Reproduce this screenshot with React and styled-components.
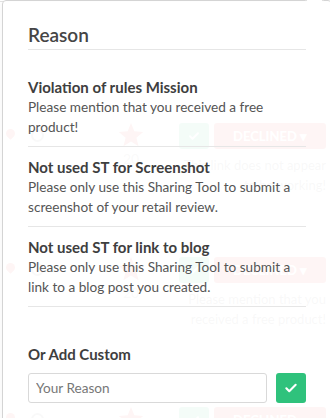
import React from "react";
import styled, { createGlobalStyle } from "styled-components";

const GlobalStyle = createGlobalStyle`
  html, body {
    margin: 0;
    padding: 0;
    overflow: hidden;
    background: #fff;
  }
  body {
    font-family: Lato, "Open Sans", sans-serif;
    color: #444;
  }
`;

const reasons = [
  {
    title: "Violation of rules Mission",
    text: "Please mention that you received a free product!",
  },
  {
    title: "Not used ST for Screenshot",
    text: "Please only use this Sharing Tool to submit a screenshot of your retail review.",
  },
  {
    title: "Not used ST for link to blog",
    text: "Please only use this Sharing Tool to submit a link to a blog post you created.",
  },
];

const rows = [
  { top: 121, note: "This link does not appear to be working!" },
  { top: 110, note: "Please mention that you received a free product!" },
  { top: 126, note: "" },
];

function Check({ size = 14 }) {
  return (
    <svg width={size} height={size} viewBox="0 0 24 24" fill="none">
      <path d="M4 12.5l5 5L20 6.5" stroke="#fff" strokeWidth="3.6" strokeLinecap="round" strokeLinejoin="round" />
    </svg>
  );
}

function Star() {
  return (
    <svg width="26" height="25" viewBox="0 0 24 23">
      <path d="M12 0l3.1 7.6 8.2.6-6.3 5.3 2 8-7-4.4-7 4.4 2-8L.7 8.2l8.2-.6z" fill="#e0413c" />
    </svg>
  );
}

export default function App() {
  return (
    <Page>
      <GlobalStyle />
      <Backdrop aria-hidden="true">
        {rows.map((row, i) => (
          <Row key={i} $top={row.top}>
            <Icons>
              <Pin />
              <Dot />
            </Icons>
            <Rating>
              <Star />
              <Count>20</Count>
            </Rating>
            <Actions>
              <Buttons>
                <OkButton><Check size={12} /></OkButton>
                <Declined>DECLINED ▾</Declined>
              </Buttons>
              <Note>{row.note}</Note>
            </Actions>
          </Row>
        ))}
      </Backdrop>

      <Popover>
        <Arrow />
        <Title>Reason</Title>
        <List>
          {reasons.map((r) => (
            <Item key={r.title}>
              <ItemTitle>{r.title}</ItemTitle>
              <ItemText>{r.text}</ItemText>
            </Item>
          ))}
        </List>
        <Custom>
          <ItemTitle>Or Add Custom</ItemTitle>
          <CustomRow>
            <Input placeholder="Your Reason" />
            <SubmitButton><Check /></SubmitButton>
          </CustomRow>
        </Custom>
      </Popover>
    </Page>
  );
}

const Page = styled.div`
  position: relative;
  width: 330px;
  height: 418px;
  overflow: hidden;
`;

const Backdrop = styled.div`
  display: flex;
  flex-direction: column;
  border-top: 1px solid #e3e3e3;
  margin-top: 1px;
`;

const Row = styled.div`
  display: flex;
  align-items: flex-start;
  padding-top: ${(p) => p.$top}px;
  height: 24px;
`;

const Icons = styled.div`
  display: flex;
  gap: 16px;
  padding: 6px 0 0 6px;
  width: 92px;
`;

const Pin = styled.span`
  width: 9px;
  height: 9px;
  background: #e0413c;
  border-radius: 50% 50% 50% 0;
  transform: rotate(-45deg);
`;

const Dot = styled.span`
  width: 9px;
  height: 9px;
  border: 2px solid #888;
  border-radius: 50%;
`;

const Rating = styled.div`
  display: flex;
  flex-direction: column;
  align-items: center;
  width: 44px;
  margin-left: 11px;
`;

const Count = styled.span`
  font-size: 14px;
  color: #999;
  margin-top: 2px;
`;

const Actions = styled.div`
  display: flex;
  flex-direction: column;
  align-items: flex-end;
  margin-left: 23px;
`;

const Buttons = styled.div`
  display: flex;
  gap: 5px;
`;

const OkButton = styled.div`
  width: 30px;
  height: 26px;
  border-radius: 3px;
  background: #2fc27c;
  display: flex;
  align-items: center;
  justify-content: center;
`;

const Declined = styled.div`
  width: 112px;
  height: 26px;
  border-radius: 3px;
  background: #e0413c;
  color: #fff;
  font-size: 13px;
  font-weight: 700;
  display: flex;
  align-items: center;
  justify-content: center;
`;

const Note = styled.div`
  width: 150px;
  text-align: right;
  font-size: 13px;
  line-height: 20px;
  color: #777;
  margin-top: 6px;
`;

const Popover = styled.div`
  position: absolute;
  left: 2px;
  top: 0;
  width: 278px;
  height: 440px;
  padding: 21px 25px 0 25px;
  display: flex;
  flex-direction: column;
  border: 1px solid #d4d4d4;
  border-radius: 4px;
  background: rgba(255, 255, 255, 0.95);
  box-shadow: 0 2px 8px rgba(0, 0, 0, 0.05);
`;

const Arrow = styled.span`
  position: absolute;
  top: -7px;
  left: 305px;
  width: 12px;
  height: 12px;
  background: #fff;
  border-left: 1px solid #d4d4d4;
  border-top: 1px solid #d4d4d4;
  transform: rotate(45deg);
`;

const Title = styled.h3`
  flex: none;
  margin: 0;
  font-size: 19px;
  font-weight: 600;
  color: #454545;
  line-height: 26px;
  padding-bottom: 1px;
  border-bottom: 1px solid #e6e6e6;
`;

const List = styled.div`
  flex: none;
  display: flex;
  flex-direction: column;
  gap: 10px;
  margin-top: 27px;
`;

const Item = styled.div`
  flex: none;
  height: 60px;
  padding-bottom: 9px;
  border-bottom: 1px solid #e6e6e6;
`;

const ItemTitle = styled.div`
  font-size: 15px;
  font-weight: 700;
  color: #3e3e3e;
  line-height: 20px;
`;

const ItemText = styled.div`
  font-size: 13.6px;
  color: #555;
  line-height: 20px;
`;

const Custom = styled.div`
  flex: none;
  margin-top: 37px;
`;

const CustomRow = styled.div`
  display: flex;
  gap: 9px;
  margin-top: 9px;
`;

const Input = styled.input`
  flex: 1;
  min-width: 0;
  height: 30px;
  box-sizing: border-box;
  border: 1px solid #d9d9d9;
  border-radius: 3px;
  padding: 0 7px;
  font-family: inherit;
  font-size: 13.6px;
  color: #555;
  background: #fff;
  &::placeholder {
    color: #777;
  }
`;

const SubmitButton = styled.button`
  width: 30px;
  height: 30px;
  border: none;
  border-radius: 3px;
  background: #2fc27c;
  display: flex;
  align-items: center;
  justify-content: center;
  padding: 0;
`;
